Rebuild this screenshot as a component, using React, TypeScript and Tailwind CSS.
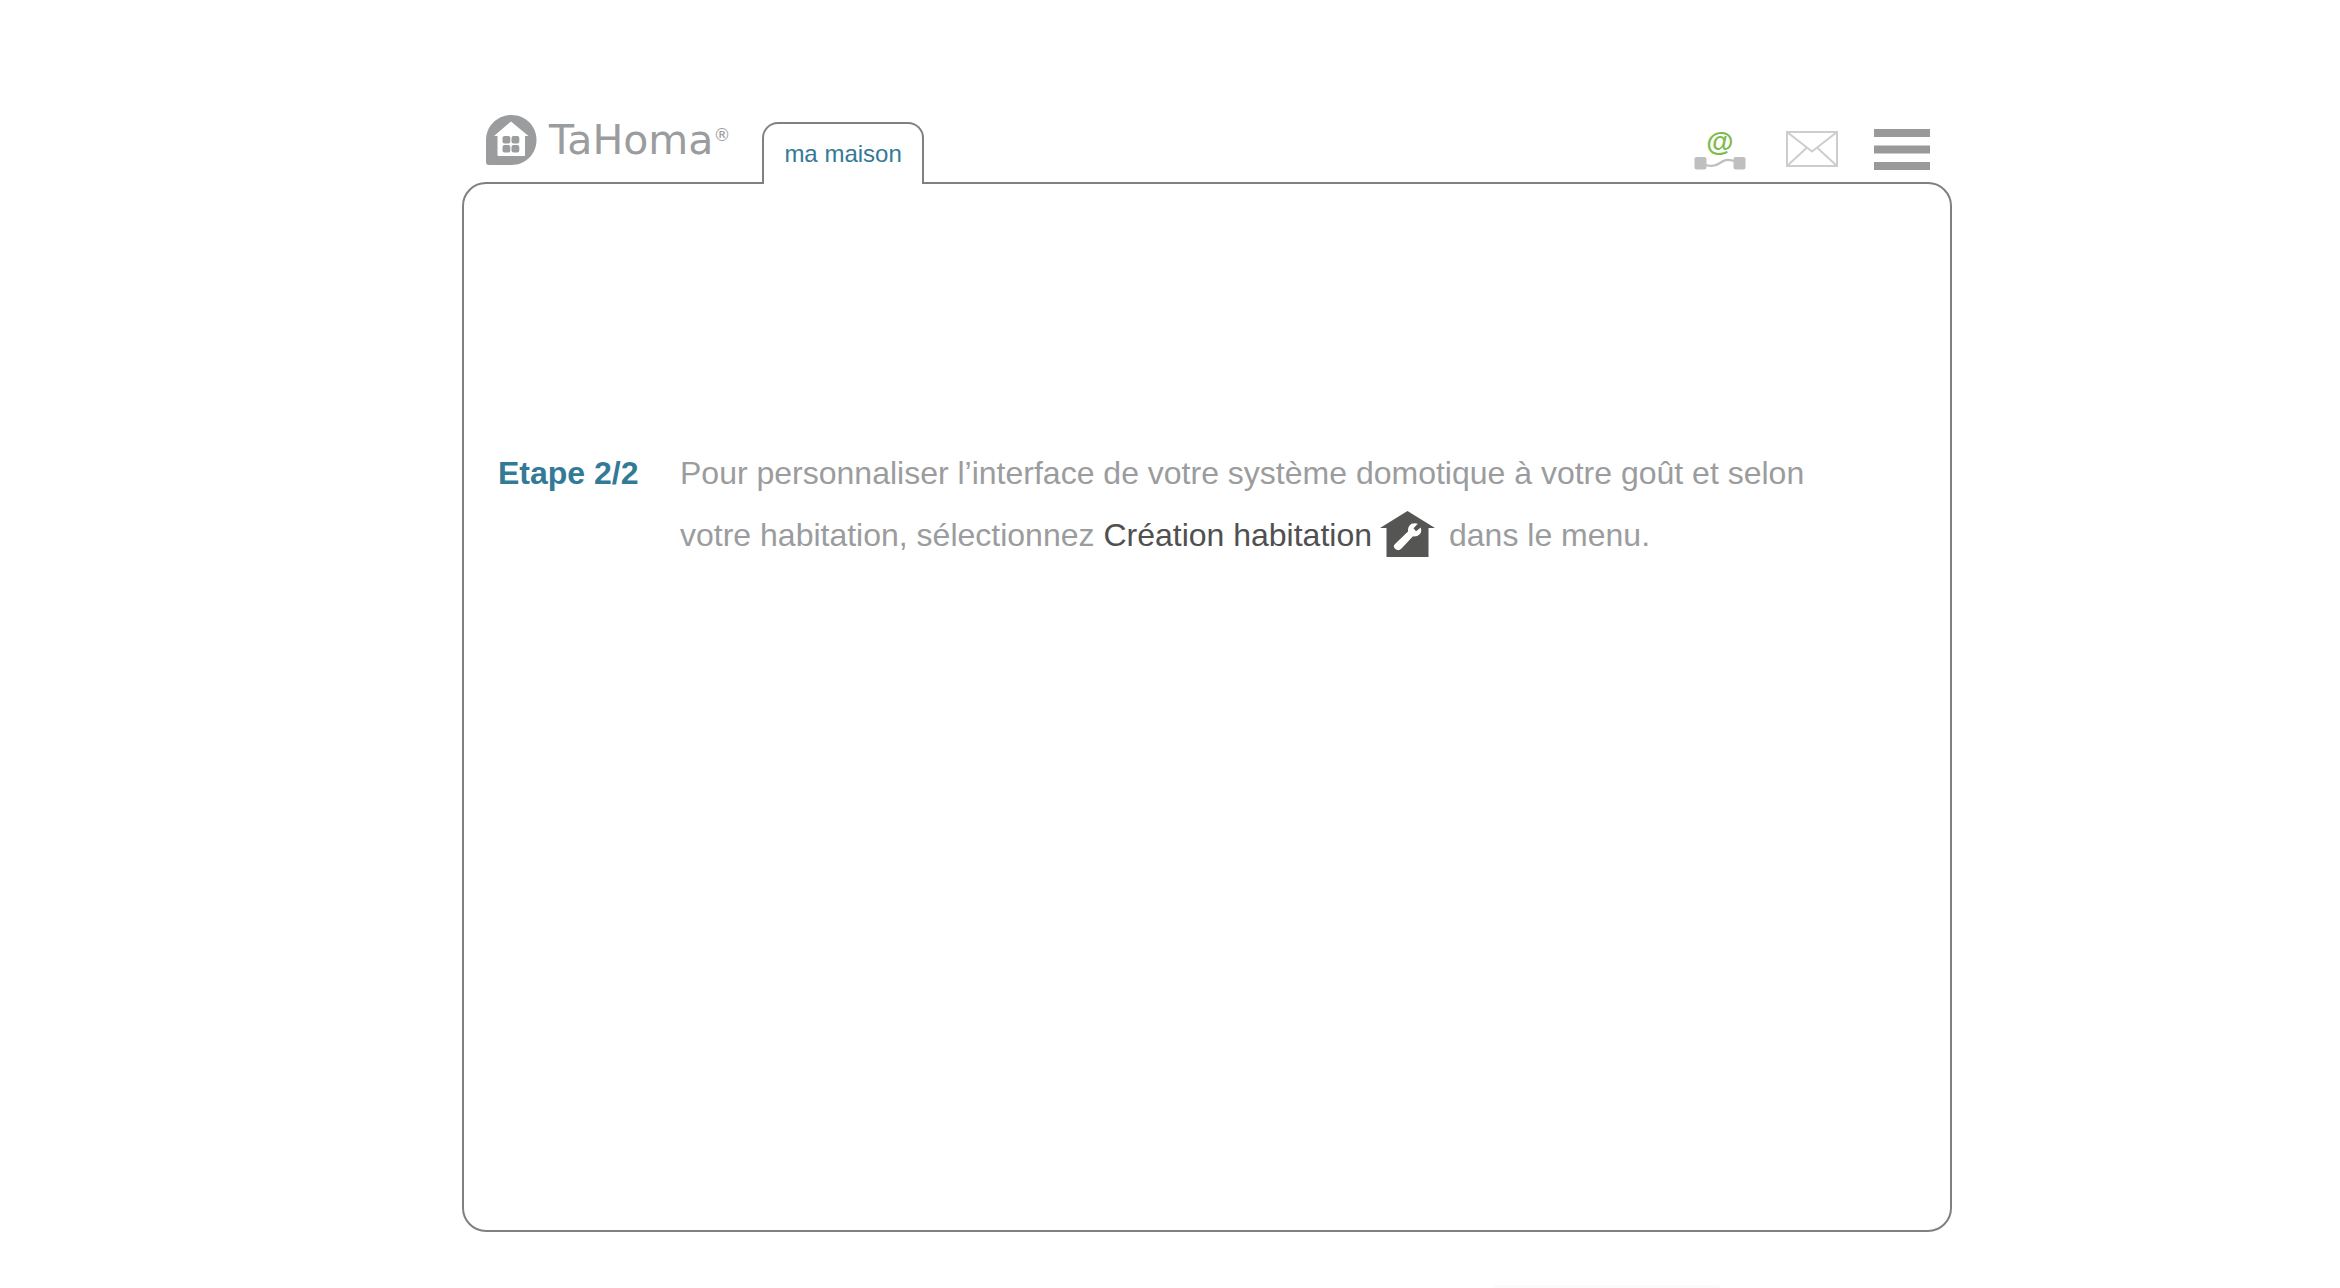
import type { ReactNode } from 'react';

function HomeLogo() {
  return (
    <svg width="51" height="50" viewBox="0 0 51 50" aria-hidden="true">
      <path d="M25.5 0C39.5 0 50.5 11 50.5 25S39.5 50 25.5 50H3Q0 50 0 47V25C0 11 11.5 0 25.5 0Z" fill="#9b9c9e" />
      <path d="M25 6.5 42.5 21H39V41H12.500Q11.500 41 11.500 40V21H8Z" fill="#fff" />
      <g fill="#9b9c9e">
        <rect x="16.500" y="21" width="7.800" height="7.500" rx="2" />
        <rect x="25.500" y="21" width="7.800" height="7.500" rx="2" />
        <rect x="16.500" y="30" width="7.800" height="7.500" rx="2" />
        <rect x="25.500" y="30" width="7.800" height="7.500" rx="2" />
      </g>
    </svg>
  );
}

function CableIcon() {
  return (
    <svg width="52" height="14" viewBox="0 0 52 14" aria-hidden="true">
      <path d="M12 9C18 11 22 10 26 7S33 3 40 5" fill="none" stroke="#bfbfbf" strokeWidth="2.200" />
      <rect x="0.500" y="1" width="12" height="12.500" rx="2" fill="#bfbfbf" />
      <rect x="39.500" y="1" width="12" height="12.500" rx="2" fill="#bfbfbf" />
    </svg>
  );
}

function EnvelopeIcon() {
  return (
    <svg width="52" height="36" viewBox="0 0 52 36" fill="none" stroke="#cdcdcd" strokeWidth="2" aria-hidden="true">
      <rect x="1" y="1" width="50" height="34" />
      <path d="M1 1 26 20.500 51 1M1 35 20.500 17M51 35 31.500 17" />
    </svg>
  );
}

function MenuIcon() {
  return (
    <svg width="56" height="41" viewBox="0 0 56 41" fill="#999" aria-hidden="true">
      <rect width="56" height="8" />
      <rect y="16.500" width="56" height="8" />
      <rect y="33" width="56" height="8" />
    </svg>
  );
}

function HouseToolIcon() {
  return (
    <svg width="55" height="46" viewBox="0 0 55 46" className="mr-3.5 -mb-[11px] ml-2 inline-block align-baseline" aria-hidden="true">
      <path d="M27.500 0 55 17H48.500V46H6.500V17H0Z" fill="#555553" />
      <path
        d="M15 33 28 20.500Q27.500 15.500 31.500 12.800 35 11.500 37.800 12.800L33.500 17.300 36 20.300 40.800 16.500Q42 21 39.500 23.500 37 25.800 33 25.300L21.500 37.500Q18.500 40.500 15.300 38 12.500 35.500 15 33Z"
        fill="#fff"
      />
    </svg>
  );
}

interface HeaderButtonProps {
  label: string;
  children: ReactNode;
}

function HeaderButton({ label, children }: HeaderButtonProps) {
  return (
    <button type="button" aria-label={label} className="flex cursor-pointer flex-col items-center">
      {children}
    </button>
  );
}

export default function App() {
  return (
    <div className="flex min-h-screen flex-col bg-white pt-[115px] pl-[74px] font-['Liberation_Sans',Arial,sans-serif]">
      <div className="mx-auto flex w-full max-w-[1490px] flex-1 flex-col">
        <header className="flex items-end pr-[22px] pl-6">
          <a href="#accueil" className="mr-8 mb-[17px] flex items-center gap-3 text-[#9b9c9e]">
            <HomeLogo />
            <span className="flex items-start font-['DejaVu_Sans',Verdana,sans-serif] text-[41px] leading-[50px]">
              TaHoma
              <span className="text-[17px] leading-10">®</span>
            </span>
          </a>
          <nav className="relative -mb-0.5">
            <a
              href="#maison"
              className="block h-[62px] rounded-t-2xl border-2 border-b-0 border-[#808080] bg-white px-5 text-2xl leading-[60px] text-[#337a96]"
            >
              ma maison
            </a>
          </nav>
          <div className="mb-3 ml-auto flex items-center gap-10">
            <HeaderButton label="Connexion">
              <span className="text-[28px] leading-7 font-bold text-[#7dbb4b]">@</span>
              <CableIcon />
            </HeaderButton>
            <div className="flex items-center gap-9">
              <HeaderButton label="Messages">
                <EnvelopeIcon />
              </HeaderButton>
              <HeaderButton label="Menu">
                <MenuIcon />
              </HeaderButton>
            </div>
          </div>
        </header>

        <main className="flex-1 rounded-3xl border-2 border-[#808080] px-[34px] pt-[258px]">
          <section className="flex text-[32px] leading-[62px]">
            <h1 className="w-[182px] shrink-0 font-bold text-[#337a96]">Etape 2/2</h1>
            <p className="max-w-[1160px] text-[#9b9c9e]">
              Pour personnaliser l’interface de votre système domotique à votre goût et selon votre habitation, sélectionnez{' '}
              <span className="text-[#505050]">Création habitation</span>
              <HouseToolIcon />
              dans le menu.
            </p>
          </section>
        </main>
      </div>
      <footer className="mt-[53px] flex justify-center pl-[800px]">
        <div className="h-[3px] w-[228px] rounded-t-full bg-[#fbfbfb]" />
      </footer>
    </div>
  );
}
